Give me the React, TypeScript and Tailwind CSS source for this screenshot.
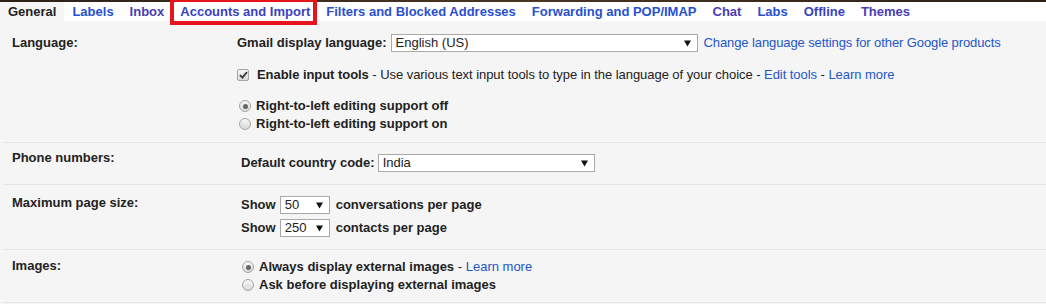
import React from "react";

const tabs = [
  { label: "General", color: "text-[#222]", active: true },
  { label: "Labels", color: "text-[#2550d0]" },
  { label: "Inbox", color: "text-[#4a3cb6]" },
  { label: "Accounts and Import", color: "text-[#3b3fc0]" },
  { label: "Filters and Blocked Addresses", color: "text-[#2a4fd2]" },
  { label: "Forwarding and POP/IMAP", color: "text-[#2550d0]" },
  { label: "Chat", color: "text-[#4a3cb6]" },
  { label: "Labs", color: "text-[#2a4fd2]" },
  { label: "Offline", color: "text-[#3b3fc0]" },
  { label: "Themes", color: "text-[#4a3cb6]" },
];

const Arrow = () => (
  <svg width="7" height="7" viewBox="0 0 7 7" className="shrink-0">
    <path d="M0 0.5h7L3.5 6.5z" fill="#111" />
  </svg>
);

const Select = ({ children, className }: { children: React.ReactNode; className: string }) => (
  <div
    className={`flex h-[18px] items-center justify-between border border-[#a9a9a9] bg-white pl-[4px] pr-[6px] font-normal text-[#222] ${className}`}
  >
    <span>{children}</span>
    <Arrow />
  </div>
);

const Radio = ({ checked }: { checked?: boolean }) => (
  <span className="relative inline-block h-[12px] w-[12px] shrink-0 rounded-full border border-[#a6a6a6] bg-linear-to-b from-[#f6f6f6] to-[#dadada]">
    {checked && <span className="absolute left-[2.5px] top-[2.5px] h-[5px] w-[5px] rounded-full bg-[#666]" />}
  </span>
);

const Checkbox = () => (
  <span className="flex h-[12px] w-[12px] shrink-0 items-center justify-center rounded-[2px] border border-[#a6a6a6] bg-linear-to-b from-[#f6f6f6] to-[#dadada]">
    <svg width="9" height="8" viewBox="0 0 9 8">
      <path d="M1 4.2 3.4 6.6 8 1.2" fill="none" stroke="#3a3a3a" strokeWidth="1.8" />
    </svg>
  </span>
);

const Link = ({ children }: { children: React.ReactNode }) => (
  <a className="font-normal text-[#2356c9]">{children}</a>
);

export default function App() {
  return (
    <div className="relative min-h-[304px] w-full overflow-hidden bg-[#f5f5f5] font-['Liberation_Sans',Arial,sans-serif] text-[13px] leading-[16px] text-[#222]">
      {/* Theme strip + tabs */}
      <div className="h-[2px] bg-linear-to-r from-[#2a2119] via-[#4a3522] to-[#2a2119]" />
      <nav className="flex h-[19px] bg-white">
        {tabs.map((t) => (
          <div
            key={t.label}
            className={`flex items-center px-2 font-bold ${t.color} ${t.active ? "bg-[#f5f5f5]" : ""}`}
          >
            {t.label}
          </div>
        ))}
      </nav>

      {/* Annotation box */}
      <div className="absolute left-[170px] top-[-2px] h-[27px] w-[147px] border-[4px] border-[#e8141b]" />

      {/* Language */}
      <section className="ml-[3px] flex border-b border-[#e5e5e5] pb-[9px]">
        <div className="w-[234px] shrink-0 pl-[9px] pt-[14px] font-bold">Language:</div>
        <div className="pt-[13px]">
          <div className="flex h-[18px] items-center">
            <span className="font-bold">Gmail display language:</span>
            <Select className="ml-[4px] w-[307px]">English (US)</Select>
            <span className="ml-[6px] tracking-[-0.1px]">
              <Link>Change language settings for other Google products</Link>
            </span>
          </div>
          <div className="mt-[15px] flex h-[16px] items-center">
            <Checkbox />
            <span className="ml-[8px] tracking-[-0.05px]">
              <b>Enable input tools</b> - Use various text input tools to type in the language of your choice -{" "}
              <Link>Edit tools</Link> - <Link>Learn more</Link>
            </span>
          </div>
          <div className="mt-[14px] flex h-[18px] items-center pl-[2px]">
            <Radio checked />
            <span className="ml-[5px] font-bold">Right-to-left editing support off</span>
          </div>
          <div className="flex h-[18px] items-center pl-[2px]">
            <Radio />
            <span className="ml-[5px] font-bold">Right-to-left editing support on</span>
          </div>
        </div>
      </section>

      {/* Phone numbers */}
      <section className="ml-[3px] flex border-b border-[#e5e5e5] pb-[12px]">
        <div className="w-[238px] shrink-0 pl-[9px] pt-[7px] font-bold">Phone numbers:</div>
        <div className="pt-[11px]">
          <div className="flex h-[18px] items-center font-bold">
            <span>Default country code:</span>
            <Select className="ml-[3px] w-[217px]">India</Select>
          </div>
        </div>
      </section>

      {/* Maximum page size */}
      <section className="ml-[3px] flex border-b border-[#e5e5e5] pb-[12px]">
        <div className="w-[238px] shrink-0 pl-[9px] pt-[10px] font-bold">Maximum page size:</div>
        <div className="pt-[11px] font-bold">
          <div className="flex h-[18px] items-center">
            <span>Show</span>
            <Select className="ml-[4px] w-[50px]">50</Select>
            <span className="ml-[6px]">conversations per page</span>
          </div>
          <div className="mt-[5px] flex h-[18px] items-center">
            <span>Show</span>
            <Select className="ml-[4px] w-[50px]">250</Select>
            <span className="ml-[6px]">contacts per page</span>
          </div>
        </div>
      </section>

      {/* Images */}
      <section className="ml-[3px] flex border-b border-[#e5e5e5] pb-[8px]">
        <div className="w-[237px] shrink-0 pl-[9px] pt-[8px] font-bold">Images:</div>
        <div className="pt-[8px] font-bold">
          <div className="flex h-[18px] items-center pl-[2px]">
            <Radio checked />
            <span className="ml-[5px]">
              Always display external images <span className="font-normal">-</span> <Link>Learn more</Link>
            </span>
          </div>
          <div className="flex h-[18px] items-center pl-[2px]">
            <Radio />
            <span className="ml-[5px]">Ask before displaying external images</span>
          </div>
        </div>
      </section>
    </div>
  );
}
